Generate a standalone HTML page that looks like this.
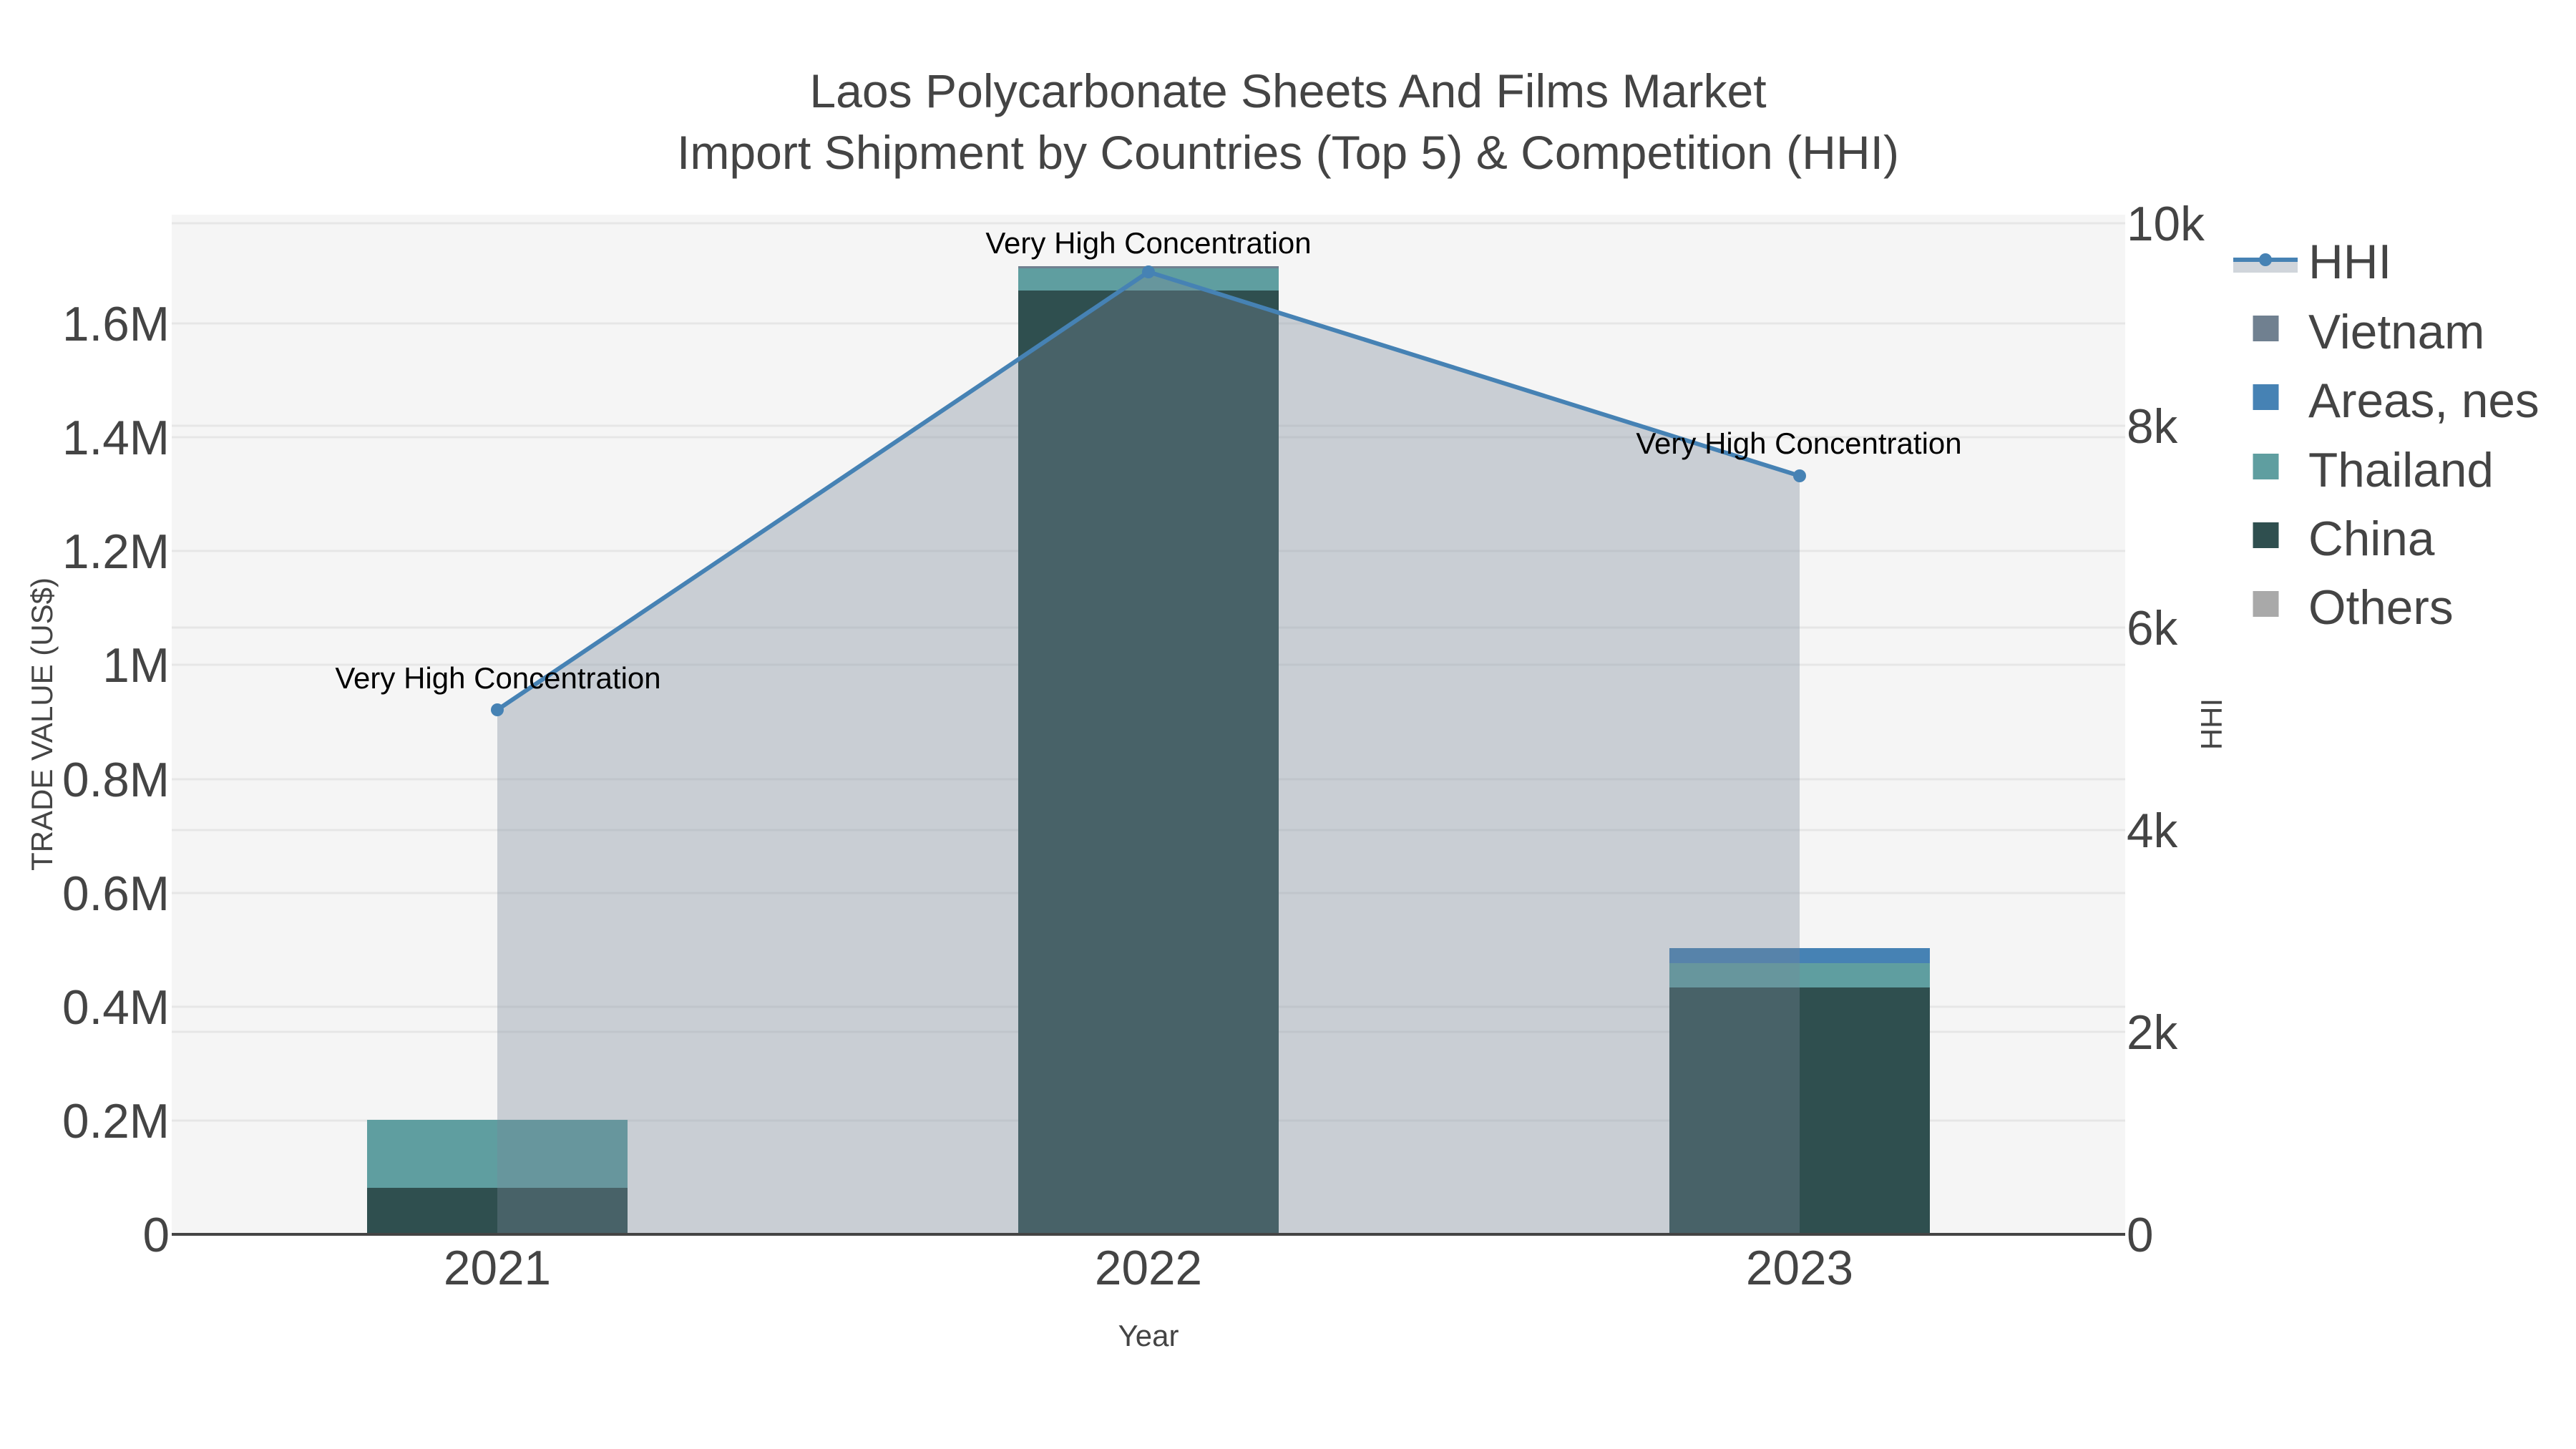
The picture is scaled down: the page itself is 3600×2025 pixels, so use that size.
<!DOCTYPE html>
<html>
<head>
<meta charset="utf-8">
<title>Laos Polycarbonate Sheets And Films Market</title>
<style>
html,body{margin:0;padding:0;background:#fff;width:3600px;height:2025px;overflow:hidden}
svg{display:block}
text{font-family:"Liberation Sans",sans-serif;fill:#444}
.t{font-size:66.1px}
.k{font-size:67.5px}
.a{font-size:42px}
.n{font-size:42px;fill:#000}
.g line{stroke:#e6e6e6;stroke-width:3}
</style>
</head>
<body>
<svg xmlns="http://www.w3.org/2000/svg" width="3600" height="2025" viewBox="0 0 3600 2025">
<rect width="3600" height="2025" fill="#fff"/>
<rect x="240" y="300" width="2730" height="1425" fill="#f5f5f5"/>
<g class="g">
<line x1="240" x2="2970" y1="1566" y2="1566"/>
<line x1="240" x2="2970" y1="1407" y2="1407"/>
<line x1="240" x2="2970" y1="1248" y2="1248"/>
<line x1="240" x2="2970" y1="1089" y2="1089"/>
<line x1="240" x2="2970" y1="929" y2="929"/>
<line x1="240" x2="2970" y1="770" y2="770"/>
<line x1="240" x2="2970" y1="611" y2="611"/>
<line x1="240" x2="2970" y1="452" y2="452"/>
<line x1="240" x2="2970" y1="1442" y2="1442"/>
<line x1="240" x2="2970" y1="1160" y2="1160"/>
<line x1="240" x2="2970" y1="877" y2="877"/>
<line x1="240" x2="2970" y1="595" y2="595"/>
<line x1="240" x2="2970" y1="312" y2="312"/>
</g>
<!-- bars -->
<rect x="513" y="1565" width="364" height="95" fill="#5f9ea0"/>
<rect x="513" y="1660" width="364" height="65" fill="#2f4f4f"/>
<rect x="1423" y="372" width="364" height="3" fill="#708090"/>
<rect x="1423" y="375" width="364" height="31" fill="#5f9ea0"/>
<rect x="1423" y="406" width="364" height="1319" fill="#2f4f4f"/>
<rect x="2333" y="1325" width="364" height="21" fill="#4682b4"/>
<rect x="2333" y="1346" width="364" height="34" fill="#5f9ea0"/>
<rect x="2333" y="1380" width="364" height="345" fill="#2f4f4f"/>
<!-- zero line -->
<line x1="240" x2="2970" y1="1725" y2="1725" stroke="#444" stroke-width="4"/>
<!-- HHI area and line -->
<path d="M695 992L1605 380L2515 665V1723H695Z" fill="#778899" fill-opacity=".35"/>
<path d="M695 992L1605 380L2515 665" fill="none" stroke="#4682b4" stroke-width="6"/>
<circle cx="695" cy="992" r="9" fill="#4682b4"/>
<circle cx="1605" cy="380" r="9" fill="#4682b4"/>
<circle cx="2515" cy="665" r="9" fill="#4682b4"/>
<!-- annotations -->
<text class="n" x="696" y="962" text-anchor="middle">Very High Concentration</text>
<text class="n" x="1605" y="354" text-anchor="middle">Very High Concentration</text>
<text class="n" x="2514" y="634" text-anchor="middle">Very High Concentration</text>
<!-- title -->
<text class="t" x="1800" y="150" text-anchor="middle">Laos Polycarbonate Sheets And Films Market</text>
<text class="t" x="1800" y="236" text-anchor="middle">Import Shipment by Countries (Top 5) &amp; Competition (HHI)</text>
<!-- left ticks -->
<g class="k" text-anchor="end">
<text x="237" y="476">1.6M</text>
<text x="237" y="635">1.4M</text>
<text x="237" y="794">1.2M</text>
<text x="237" y="953">1M</text>
<text x="237" y="1113">0.8M</text>
<text x="237" y="1272">0.6M</text>
<text x="237" y="1431">0.4M</text>
<text x="237" y="1590">0.2M</text>
<text x="237" y="1749">0</text>
</g>
<!-- right ticks -->
<g class="k">
<text x="2972" y="336">10k</text>
<text x="2972" y="619">8k</text>
<text x="2972" y="901">6k</text>
<text x="2972" y="1184">4k</text>
<text x="2972" y="1466">2k</text>
<text x="2972" y="1749">0</text>
</g>
<!-- x ticks -->
<g class="k" text-anchor="middle">
<text x="695" y="1795">2021</text>
<text x="1605" y="1795">2022</text>
<text x="2515" y="1795">2023</text>
</g>
<!-- axis titles -->
<text class="a" x="1605" y="1881" text-anchor="middle">Year</text>
<text class="a" x="0" y="0" text-anchor="middle" transform="translate(73 1012) rotate(-90)">TRADE VALUE (US$)</text>
<text class="a" x="0" y="0" text-anchor="middle" transform="translate(3105 1012) rotate(-90)">HHI</text>
<!-- legend -->
<rect x="3121" y="363" width="90" height="18" fill="#778899" fill-opacity=".35"/>
<line x1="3121" x2="3211" y1="363" y2="363" stroke="#4682b4" stroke-width="6"/>
<circle cx="3166" cy="363" r="9" fill="#4682b4"/>
<rect x="3148.5" y="441" width="36" height="36" fill="#708090"/>
<rect x="3148.5" y="537" width="36" height="36" fill="#4682b4"/>
<rect x="3148.5" y="634" width="36" height="36" fill="#5f9ea0"/>
<rect x="3148.5" y="730" width="36" height="36" fill="#2f4f4f"/>
<rect x="3148.5" y="826" width="36" height="36" fill="#a9a9a9"/>
<g class="k">
<text x="3226" y="389">HHI</text>
<text x="3226" y="487">Vietnam</text>
<text x="3226" y="583">Areas, nes</text>
<text x="3226" y="680">Thailand</text>
<text x="3226" y="776">China</text>
<text x="3226" y="872">Others</text>
</g>
</svg>
</body>
</html>
